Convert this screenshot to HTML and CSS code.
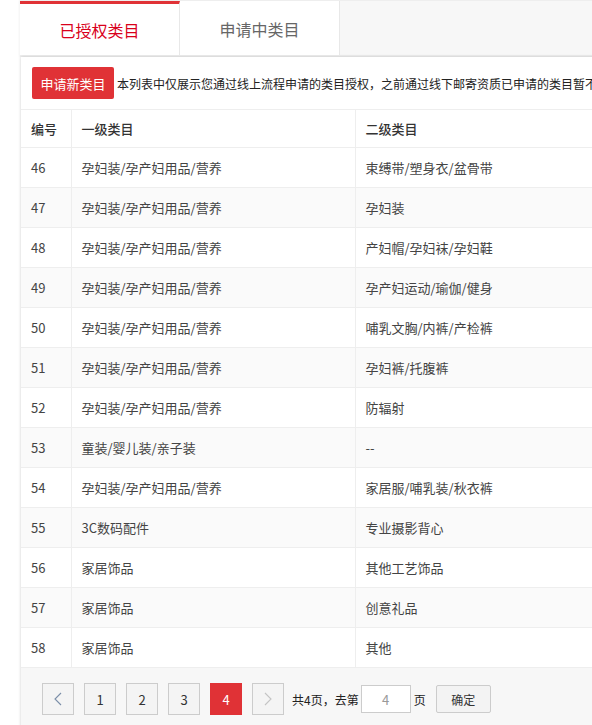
FILE: index.html
```html
<!DOCTYPE html>
<html lang="zh-CN">
<head>
<meta charset="utf-8">
<title>类目管理</title>
<link rel="stylesheet" href="styles.css">
</head>
<body>
<div class="wrap">
  <div class="tabs">
    <div class="tab active">已授权类目</div>
    <div class="tab">申请中类目</div>
  </div>
  <div class="panel">
    <div class="toolbar">
      <button class="btn-apply">申请新类目</button>
      <span class="notice">本列表中仅展示您通过线上流程申请的类目授权，之前通过线下邮寄资质已申请的类目暂不在此列表中展示</span>
    </div>
    <table class="grid">
      <colgroup>
        <col class="c1"><col class="c2"><col class="c3">
      </colgroup>
      <thead>
        <tr><th>编号</th><th>一级类目</th><th>二级类目</th></tr>
      </thead>
      <tbody>
        <tr><td>46</td><td>孕妇装/孕产妇用品/营养</td><td>束缚带/塑身衣/盆骨带</td></tr>
        <tr><td>47</td><td>孕妇装/孕产妇用品/营养</td><td>孕妇装</td></tr>
        <tr><td>48</td><td>孕妇装/孕产妇用品/营养</td><td>产妇帽/孕妇袜/孕妇鞋</td></tr>
        <tr><td>49</td><td>孕妇装/孕产妇用品/营养</td><td>孕产妇运动/瑜伽/健身</td></tr>
        <tr><td>50</td><td>孕妇装/孕产妇用品/营养</td><td>哺乳文胸/内裤/产检裤</td></tr>
        <tr><td>51</td><td>孕妇装/孕产妇用品/营养</td><td>孕妇裤/托腹裤</td></tr>
        <tr><td>52</td><td>孕妇装/孕产妇用品/营养</td><td>防辐射</td></tr>
        <tr><td>53</td><td>童装/婴儿装/亲子装</td><td>--</td></tr>
        <tr><td>54</td><td>孕妇装/孕产妇用品/营养</td><td>家居服/哺乳装/秋衣裤</td></tr>
        <tr><td>55</td><td>3C数码配件</td><td>专业摄影背心</td></tr>
        <tr><td>56</td><td>家居饰品</td><td>其他工艺饰品</td></tr>
        <tr><td>57</td><td>家居饰品</td><td>创意礼品</td></tr>
        <tr><td>58</td><td>家居饰品</td><td>其他</td></tr>
      </tbody>
    </table>
    <div class="pager">
      <span class="pg prev"><svg width="8" height="14" viewBox="0 0 8 14"><path d="M7 1 L1 7 L7 13" fill="none" stroke="#7a8ea8" stroke-width="1.1"/></svg></span>
      <span class="pg">1</span>
      <span class="pg">2</span>
      <span class="pg">3</span>
      <span class="pg current">4</span>
      <span class="pg next"><svg width="8" height="14" viewBox="0 0 8 14"><path d="M1 1 L7 7 L1 13" fill="none" stroke="#c4c4c4" stroke-width="1.1"/></svg></span>
      <span class="total">共4页，去第</span>
      <input class="goto" type="text" value="4">
      <span class="unit">页</span>
      <button class="btn-ok">确定</button>
    </div>
  </div>
</div>
</body>
</html>
```
FILE: styles.css
```css
html, body {
  margin: 0;
  padding: 0;
  overflow: hidden;
  background: #fff;
}
body {
  font-family: "Noto Sans CJK SC", "Microsoft YaHei", sans-serif;
  color: #333;
}
.wrap {
  margin-left: 20px;
  width: 900px;
}
.tabs {
  display: flex;
  height: 54px;
  border-top: 1px solid #eee;
  border-bottom: 2px solid #efefef;
  background: #f7f7f7;
  box-shadow: -1px 0 2px rgba(0,0,0,0.05);
}
.tab {
  width: 160px;
  background: #fff;
  border-right: 1px solid #e8e8e8;
  font-size: 16px;
  color: #666;
  display: flex;
  align-items: center;
  justify-content: center;
  box-sizing: border-box;
  padding-top: 1px;
}
.tab.active {
  border-top: 3px solid #e03236;
  color: #d9001b;
  padding-top: 0;
}
.panel {
  margin-left: 1px;
  background: #fff;
  box-shadow: 0 0 3px rgba(0,0,0,0.2);
}
.toolbar {
  display: flex;
  align-items: center;
  height: 52px;
  padding: 0 11px;
  border-bottom: 1px solid #eee;
  white-space: nowrap;
  overflow: hidden;
}
.btn-apply {
  height: 32px;
  width: 82px;
  padding: 0;
  border: none;
  border-radius: 2px;
  background: #e03236;
  color: #fff;
  font-family: inherit;
  font-size: 13px;
  flex: none;
}
.notice {
  margin-left: 3px;
  font-size: 12px;
  color: #222;
}
.grid {
  border-collapse: collapse;
  width: 879px;
  table-layout: fixed;
  font-size: 13px;
}
.c1 { width: 50px; }
.c2 { width: 284px; }
.grid th, .grid td {
  text-align: left;
  padding: 0 10px;
  border-bottom: 1px solid #eee;
  border-right: 1px solid #eee;
  white-space: nowrap;
}
.grid th {
  height: 37px;
  font-weight: 500;
  color: #333;
}
.grid td {
  height: 39px;
  color: #444;
}
.grid tbody tr:nth-child(even) td {
  background: #fafafa;
}
.pager {
  display: flex;
  align-items: center;
  background: #f7f7f7;
  padding: 15px 0 20px 21px;
  font-size: 13px;
}
.pg {
  width: 30px;
  height: 30px;
  border: 1px solid #ccc;
  background: #f4f4f4;
  margin-right: 10px;
  display: flex;
  align-items: center;
  justify-content: center;
  color: #333;
}
.pg.current {
  background: #e03236;
  border-color: #e03236;
  color: #fff;
}
.pg.next {
  margin-right: 8px;
}
.total, .unit {
  color: #222;
  font-size: 12px;
}
.goto {
  width: 48px;
  height: 26px;
  padding: 0;
  margin: 0 3px 0 2px;
  border: 1px solid #ccc;
  background: #fff;
  text-align: center;
  font-family: inherit;
  font-size: 13px;
  color: #999;
  box-sizing: content-box;
}
.btn-ok {
  margin-left: 10px;
  width: 55px;
  height: 28px;
  padding: 0;
  border: 1px solid #ccc;
  border-radius: 2px;
  background: #f3f3f3;
  font-family: inherit;
  font-size: 12px;
  color: #333;
}
```
